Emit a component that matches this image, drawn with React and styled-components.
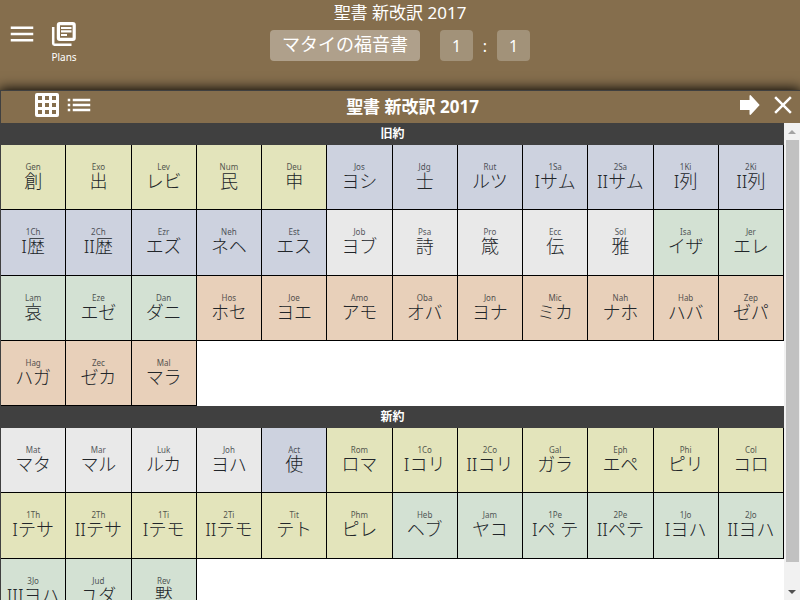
import React, { useEffect, useRef, useState } from "react";
import styled, { createGlobalStyle } from "styled-components";
import { MdMenu, MdList, MdClose } from "react-icons/md";

const tones = {
  yellow: "#e3e4bb",
  blue: "#cdd2df",
  gray: "#e9e9e9",
  green: "#d3e1d3",
  orange: "#e8d0ba",
};

const oldBooks = [
  ["Gen", "創", "yellow"], ["Exo", "出", "yellow"], ["Lev", "レビ", "yellow"],
  ["Num", "民", "yellow"], ["Deu", "申", "yellow"], ["Jos", "ヨシ", "blue"],
  ["Jdg", "士", "blue"], ["Rut", "ルツ", "blue"], ["1Sa", "Iサム", "blue"],
  ["2Sa", "IIサム", "blue"], ["1Ki", "I列", "blue"], ["2Ki", "II列", "blue"],
  ["1Ch", "I歴", "blue"], ["2Ch", "II歴", "blue"], ["Ezr", "エズ", "blue"],
  ["Neh", "ネヘ", "blue"], ["Est", "エス", "blue"], ["Job", "ヨブ", "gray"],
  ["Psa", "詩", "gray"], ["Pro", "箴", "gray"], ["Ecc", "伝", "gray"],
  ["Sol", "雅", "gray"], ["Isa", "イザ", "green"], ["Jer", "エレ", "green"],
  ["Lam", "哀", "green"], ["Eze", "エゼ", "green"], ["Dan", "ダニ", "green"],
  ["Hos", "ホセ", "orange"], ["Joe", "ヨエ", "orange"], ["Amo", "アモ", "orange"],
  ["Oba", "オバ", "orange"], ["Jon", "ヨナ", "orange"], ["Mic", "ミカ", "orange"],
  ["Nah", "ナホ", "orange"], ["Hab", "ハバ", "orange"], ["Zep", "ゼパ", "orange"],
  ["Hag", "ハガ", "orange"], ["Zec", "ゼカ", "orange"], ["Mal", "マラ", "orange"],
];

const newBooks = [
  ["Mat", "マタ", "gray"], ["Mar", "マル", "gray"], ["Luk", "ルカ", "gray"],
  ["Joh", "ヨハ", "gray"], ["Act", "使", "blue"], ["Rom", "ロマ", "yellow"],
  ["1Co", "Iコリ", "yellow"], ["2Co", "IIコリ", "yellow"], ["Gal", "ガラ", "yellow"],
  ["Eph", "エペ", "yellow"], ["Phi", "ピリ", "yellow"], ["Col", "コロ", "yellow"],
  ["1Th", "Iテサ", "yellow"], ["2Th", "IIテサ", "yellow"], ["1Ti", "Iテモ", "yellow"],
  ["2Ti", "IIテモ", "yellow"], ["Tit", "テト", "yellow"], ["Phm", "ピレ", "yellow"],
  ["Heb", "ヘブ", "green"], ["Jam", "ヤコ", "green"], ["1Pe", "Iペ テ", "green"],
  ["2Pe", "IIペテ", "green"], ["1Jo", "Iヨハ", "green"], ["2Jo", "IIヨハ", "green"],
  ["3Jo", "IIIヨハ", "green"], ["Jud", "ユダ", "green"], ["Rev", "黙", "green"],
];

const GlobalStyle = createGlobalStyle`
  *, *::before, *::after { box-sizing: border-box; }
  body {
    margin: 0;
    background: #856e4d;
    color: #fff;
    font-family: "Noto Sans", "Noto Sans CJK JP", sans-serif;
    overflow: hidden;
  }
  button {
    margin: 0;
    padding: 0;
    border: 0;
    background: none;
    color: inherit;
    font: inherit;
    cursor: pointer;
  }
  svg { display: block; }
`;

const Page = styled.div`
  display: flex;
  flex-direction: column;
  height: 100vh;
`;

const TopBar = styled.header`
  display: grid;
  grid-template-columns: 1fr auto 1fr;
  flex: 0 0 90px;
`;

const TopActions = styled.nav`
  display: flex;
  align-items: flex-start;
  gap: 12px;
  padding: 19px 7px;
`;

const IconButton = styled.button`
  display: flex;
  flex-direction: column;
  align-items: center;
  font-size: 10px;
  line-height: 16px;
`;

const Reference = styled.div`
  display: flex;
  flex-direction: column;
  align-items: center;
`;

const Title = styled.h1`
  margin: 0;
  font-size: 17px;
  font-weight: 400;
  line-height: 25px;
`;

const PickerRow = styled.div`
  display: flex;
  align-items: center;
  margin-top: 5px;
  font-size: 16px;
`;

const Picker = styled.button`
  height: 31px;
  min-width: ${(p) => (p.$wide ? "150px" : "33px")};
  margin-right: ${(p) => (p.$wide ? "20px" : "0")};
  padding-bottom: ${(p) => (p.$wide ? "3px" : "0")};
  border-radius: 4px;
  background: ${(p) => (p.$wide ? "#afa08b" : "#a29279")};
  font-size: ${(p) => (p.$wide ? "18px" : "16px")};
  line-height: 28px;
`;

const Colon = styled.span`
  width: 24px;
  text-align: center;
`;

const Panel = styled.main`
  display: flex;
  flex-direction: column;
  flex: 1;
  min-height: 0;
  border: solid #404040;
  border-width: 1px 0 0 1px;
  box-shadow: 0 0 12px 1px #000;
`;

const PanelBar = styled.div`
  display: grid;
  grid-template-columns: 1fr auto 1fr;
  align-items: center;
  flex: 0 0 32px;
  padding: 0 2px 0 34px;
  background: #856e4d;
`;

const BarGroup = styled.div`
  display: flex;
  align-items: center;
  height: 32px;
  padding-bottom: 4px;
  justify-content: ${(p) => (p.$end ? "flex-end" : "flex-start")};
  gap: ${(p) => (p.$end ? "8px" : "5px")};
`;

const PanelTitle = styled.h2`
  margin: 0 8px 0 0;
  font-size: 17px;
  font-weight: 700;
  line-height: 32px;
`;

const Body = styled.div`
  display: grid;
  grid-template-columns: 1fr 16px;
  flex: 1;
  min-height: 0;
  background: #fff;
`;

const Scroller = styled.div`
  min-height: 0;
  overflow-y: auto;
  scrollbar-width: none;
`;

const SectionTitle = styled.h3`
  margin: 0;
  height: 22px;
  background: #404040;
  color: #fff;
  font-size: 12px;
  font-weight: 700;
  line-height: 21px;
  text-align: center;
`;

const BookGrid = styled.div`
  display: grid;
  grid-template-columns: repeat(12, 1fr);
`;

const BookCell = styled.button`
  display: flex;
  flex-direction: column;
  align-items: center;
  justify-content: center;
  min-width: 0;
  aspect-ratio: 1;
  && {
    padding-bottom: 2px;
    border: solid #000;
    border-width: 0 1px 1px 0;
    background: ${(p) => tones[p.$tone]};
    color: #212529;
  }
`;

const BookCode = styled.span`
  font-size: 8px;
  line-height: 10px;
  opacity: 0.75;
`;

const BookName = styled.span`
  font-size: 18px;
  font-weight: 300;
  line-height: 18px;
  white-space: nowrap;
`;

const ScrollRail = styled.div`
  display: flex;
  flex-direction: column;
  background: #f1f1f1;
`;

const RailButton = styled.button`
  display: flex;
  align-items: center;
  justify-content: center;
  flex: 0 0 17px;
`;

const RailTrack = styled.div`
  flex: 1;
  min-height: 0;
  padding: 0 1px 0 2px;
`;

const RailThumb = styled.div`
  background: #c1c1c1;
`;

function PlansIcon() {
  return (
    <svg width="30" height="30" viewBox="0 0 30 30" fill="none" stroke="#fff" aria-hidden="true">
      <rect x="9.4" y="4.6" width="15.8" height="15.8" rx="1.4" strokeWidth="3.2" />
      <path d="M4.2 8V24.6Q4.2 25.8 5.4 25.8H22.5" strokeWidth="2.5" />
      <path d="M12 9H22.5M12 12.3H22.5M12 16H18" strokeWidth="2.2" />
    </svg>
  );
}

function GridIcon() {
  return (
    <svg width="24" height="24" viewBox="0 0 24 24" fill="#fff" aria-hidden="true">
      <path
        fillRule="evenodd"
        d="M2 0H22Q24 0 24 2V22Q24 24 22 24H2Q0 24 0 22V2Q0 0 2 0ZM3 3V7H7V3ZM10 3V7H14V3ZM17 3V7H21V3ZM3 10V14H7V10ZM10 10V14H14V10ZM17 10V14H21V10ZM3 17V21H7V17ZM10 17V21H14V17ZM17 17V21H21V17Z"
      />
    </svg>
  );
}

function ArrowIcon() {
  return (
    <svg width="20" height="20" viewBox="0 0 20 20" fill="#fff" aria-hidden="true">
      <path d="M0 5H9.5V0.5L10.5 0L19.7 10L10.5 20L9.5 19.5V15H0Z" />
    </svg>
  );
}

function Section({ title, books }) {
  return (
    <section>
      <SectionTitle>{title}</SectionTitle>
      <BookGrid>
        {books.map(([code, name, tone]) => (
          <BookCell key={code} $tone={tone}>
            <BookCode>{code}</BookCode>
            <BookName>{name}</BookName>
          </BookCell>
        ))}
      </BookGrid>
    </section>
  );
}

export default function App() {
  const scroller = useRef(null);
  const [thumb, setThumb] = useState({ size: 100, start: 0 });

  const measure = () => {
    const el = scroller.current;
    setThumb({
      size: (el.clientHeight / el.scrollHeight) * 100,
      start: (el.scrollTop / el.scrollHeight) * 100,
    });
  };

  useEffect(() => {
    measure();
    window.addEventListener("resize", measure);
    return () => window.removeEventListener("resize", measure);
  }, []);

  const scrollBy = (top) => scroller.current.scrollBy({ top });

  return (
    <Page lang="ja">
      <GlobalStyle />
      <TopBar>
        <TopActions>
          <IconButton aria-label="Menu"><MdMenu size={30} /></IconButton>
          <IconButton><PlansIcon />Plans</IconButton>
        </TopActions>
        <Reference>
          <Title>聖書 新改訳 2017</Title>
          <PickerRow>
            <Picker $wide>マタイの福音書</Picker>
            <Picker>1</Picker>
            <Colon>:</Colon>
            <Picker>1</Picker>
          </PickerRow>
        </Reference>
      </TopBar>
      <Panel>
        <PanelBar>
          <BarGroup>
            <IconButton aria-label="Grid view"><GridIcon /></IconButton>
            <IconButton aria-label="List view"><MdList size={30} /></IconButton>
          </BarGroup>
          <PanelTitle>聖書 新改訳 2017</PanelTitle>
          <BarGroup $end>
            <IconButton aria-label="Next"><ArrowIcon /></IconButton>
            <IconButton aria-label="Close"><MdClose size={30} /></IconButton>
          </BarGroup>
        </PanelBar>
        <Body>
          <Scroller ref={scroller} onScroll={measure}>
            <Section title="旧約" books={oldBooks} />
            <Section title="新約" books={newBooks} />
          </Scroller>
          <ScrollRail>
            <RailButton aria-label="Scroll up" onClick={() => scrollBy(-40)}>
              <svg width="8" height="4" viewBox="0 0 8 4" fill="#a3a3a3"><path d="M0 4L4 0L8 4Z" /></svg>
            </RailButton>
            <RailTrack>
              <RailThumb style={{ height: `${thumb.size}%`, transform: `translateY(${(thumb.start / thumb.size) * 100}%)` }} />
            </RailTrack>
            <RailButton aria-label="Scroll down" onClick={() => scrollBy(40)}>
              <svg width="8" height="4" viewBox="0 0 8 4" fill="#505050"><path d="M0 0L4 4L8 0Z" /></svg>
            </RailButton>
          </ScrollRail>
        </Body>
      </Panel>
    </Page>
  );
}
